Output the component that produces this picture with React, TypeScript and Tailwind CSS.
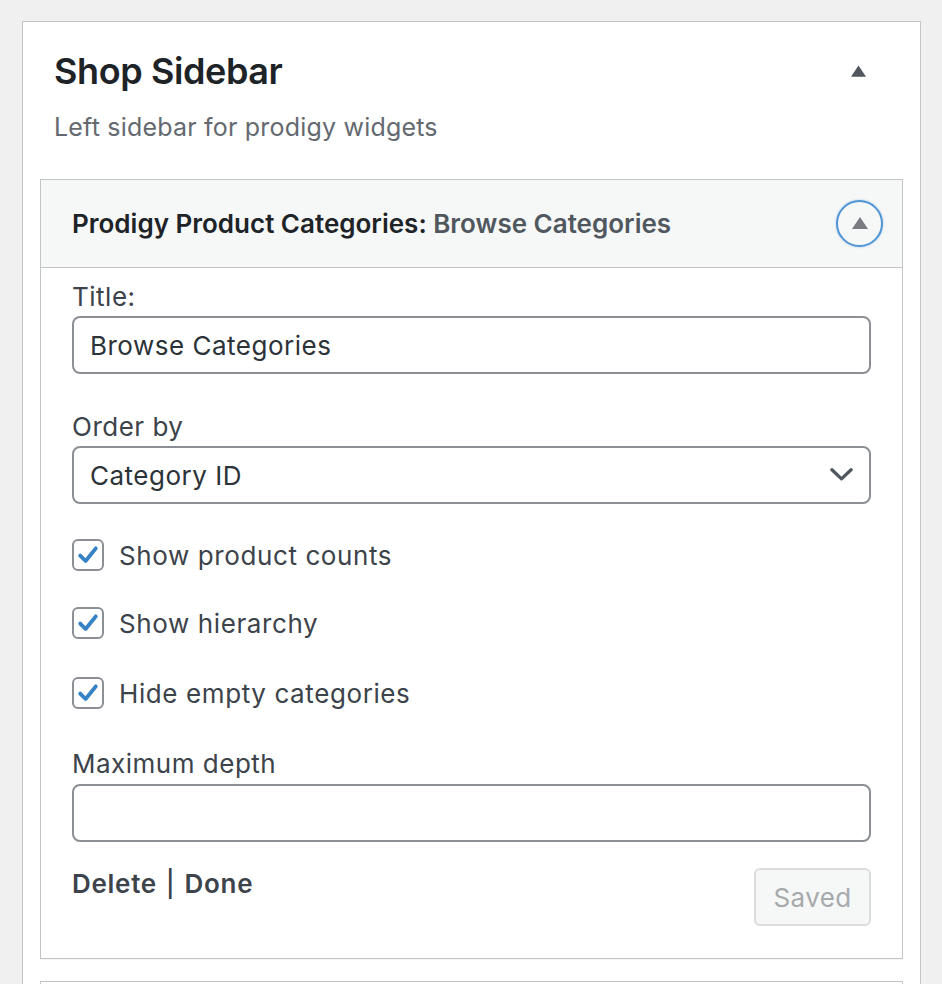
import { useState } from "react"

const font = { fontFamily: "Inter, 'Noto Sans', sans-serif" }

const Triangle = ({ className }: { className?: string }) => (
  <svg viewBox="0 0 16 12" className={className}>
    <path d="M8 0 L16 12 L0 12 Z" fill="currentColor" />
  </svg>
)

const Check = ({ label }: { label: string }) => {
  const [on, setOn] = useState(true)
  return (
    <label className="flex items-center h-[32px] gap-[15px] cursor-pointer" onClick={() => setOn(!on)}>
      <span className="w-[32px] h-[32px] rounded-[6px] border-2 border-[#8c8f94] bg-white flex items-center justify-center">
        {on && (
          <svg viewBox="0 0 20 20" className="w-[24px] h-[24px]">
            <path d="M3.5 10.5 L8 15 L16.5 4.5" fill="none" stroke="#3582c4" strokeWidth="3.2" strokeLinecap="round" strokeLinejoin="round" />
          </svg>
        )}
      </span>
      <span className="text-[26px] tracking-[0.6px] text-[#3c434a]">{label}</span>
    </label>
  )
}

export default function App() {
  return (
    <div className="min-h-screen bg-[#f0f0f1] pt-[21px] pl-[22px] overflow-hidden" style={font}>
      <div className="w-[899px] h-[1000px] bg-white border border-[#c3c4c7] px-[17px]">
        <div className="h-[157px] pl-[14px] pr-[37px] pt-[27px]">
          <div className="flex items-center justify-between h-[44px]">
            <h2 className="text-[36px] font-semibold text-[#1d2327] tracking-[-0.4px]">Shop Sidebar</h2>
            <Triangle className="w-[15px] h-[12px] text-[#50575e]" />
          </div>
          <p className="mt-[19px] text-[25px] tracking-[0.2px] text-[#646970] leading-[30px]">Left sidebar for prodigy widgets</p>
        </div>

        <div className="border border-[#c3c4c7] bg-white shadow-[0_1px_1px_rgba(0,0,0,0.04)]">
          <div className="h-[88px] bg-[#f6f7f7] border-b border-[#c3c4c7] flex items-center justify-between pl-[31px] pr-[19px]">
            <h3 className="text-[26px] font-semibold text-[#1d2327]">
              Prodigy Product Categories: <span className="text-[#50575e]">Browse Categories</span>
            </h3>
            <button className="w-[47px] h-[47px] rounded-full border-2 border-[#4f94d4] shadow-[0_0_2px_rgba(79,148,212,0.6)] flex items-center justify-center">
              <Triangle className="w-[16px] h-[12px] text-[#787c82] -mt-[2px]" />
            </button>
          </div>

          <div className="px-[31px] pt-[14px] pb-[32px]">
            <div className="text-[26px] tracking-[0.5px] leading-[30px] text-[#3c434a]">Title:</div>
            <input
              defaultValue="Browse Categories"
              className="mt-[4px] block w-full h-[58px] rounded-[8px] border-2 border-[#8c8f94] px-[16px] text-[26px] tracking-[0.5px] text-[#2c3338] outline-none"
            />

            <div className="mt-[38px] text-[26px] tracking-[0.5px] leading-[30px] text-[#3c434a]">Order by</div>
            <div className="mt-[4px] relative h-[58px] rounded-[8px] border-2 border-[#8c8f94] flex items-center px-[16px] text-[26px] tracking-[0.5px] text-[#2c3338]">
              Category ID
              <svg viewBox="0 0 24 14" className="absolute right-[16px] top-[19px] w-[23px] h-[15px]">
                <path d="M2 2 L12 11.5 L22 2" fill="none" stroke="#50575e" strokeWidth="3.4" strokeLinecap="round" strokeLinejoin="round" />
              </svg>
            </div>

            <div className="mt-[35px] flex flex-col gap-[36px]">
              <Check label="Show product counts" />
              <Check label="Show hierarchy" />
              <div className="mt-[2px]">
                <Check label="Hide empty categories" />
              </div>
            </div>

            <div className="mt-[40px] text-[26px] tracking-[0.5px] leading-[30px] text-[#3c434a]">Maximum depth</div>
            <input className="mt-[5px] block w-full h-[58px] rounded-[8px] border-2 border-[#8c8f94] px-[16px] text-[26px] outline-none" />

            <div className="mt-[26px] flex items-start justify-between">
              <div className="mt-[1px] text-[26px] tracking-[0.7px] leading-[30px] font-semibold text-[#3c434a]">
                <span>Delete</span>
                <span className="font-medium mx-[9px]">|</span>
                <span>Done</span>
              </div>
              <button className="w-[117px] h-[58px] rounded-[6px] border-2 border-[#dcdcde] bg-[#f6f7f7] text-[26px] tracking-[0.4px] text-[#a7aaad]">
                Saved
              </button>
            </div>
          </div>
        </div>

        <div className="mt-[22px] h-[40px] border border-[#c3c4c7] bg-white" />
      </div>
    </div>
  )
}
